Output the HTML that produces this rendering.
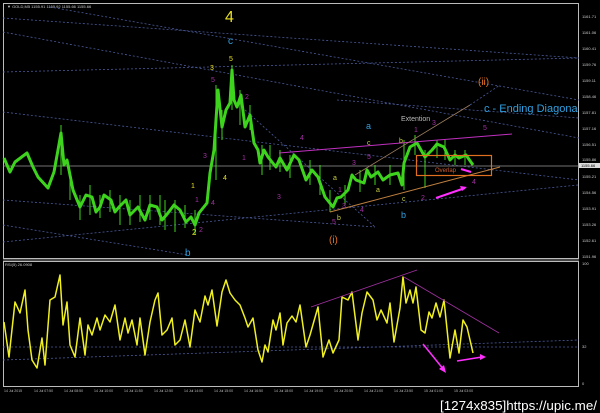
<!DOCTYPE html>
<html><head><meta charset="utf-8"><style>
html,body{margin:0;padding:0;background:#000;width:600px;height:413px;overflow:hidden}
svg{display:block}
text{font-family:"Liberation Sans",sans-serif}
</style></head><body>
<svg width="600" height="413" viewBox="0 0 600 413" xmlns="http://www.w3.org/2000/svg">
<rect width="600" height="413" fill="#000"/>
<rect x="3.5" y="3.5" width="575" height="255" fill="none" stroke="#bbb" stroke-width="1"/>
<rect x="3.5" y="261.5" width="575" height="125" fill="none" stroke="#bbb" stroke-width="1"/>
<line x1="3" y1="260" x2="579" y2="260" stroke="#888"/>
<text x="7" y="8" font-size="4" fill="#ccc">▼ GOLD,M5  1155.91 1155.92 1155.66 1155.66</text>
<text x="5" y="266" font-size="4" fill="#ccc">RSI(5) 26.0908</text>
<g font-size="4" fill="#ccc">
<text x="582" y="18">1161.71</text><text x="582" y="34">1161.06</text><text x="582" y="50">1160.41</text>
<text x="582" y="66">1159.76</text><text x="582" y="82">1159.11</text><text x="582" y="98">1158.46</text>
<text x="582" y="114">1157.81</text><text x="582" y="130">1157.16</text><text x="582" y="146">1156.51</text>
<text x="582" y="161">1155.86</text><text x="582" y="178">1155.21</text><text x="582" y="194">1154.56</text>
<text x="582" y="210">1153.91</text><text x="582" y="226">1153.26</text><text x="582" y="242">1152.61</text>
<text x="582" y="258">1151.96</text><text x="582" y="265">100</text><text x="582" y="348">32</text><text x="582" y="385">0</text>
</g>
<rect x="579" y="163" width="21" height="5" fill="#ddd"/>
<text x="581" y="167" font-size="4" fill="#000">1155.66</text>
<g font-size="3.5" fill="#bbb">
<text x="4" y="392">14 Jul 2015</text><text x="34" y="392">14 Jul 07:50</text><text x="64" y="392">14 Jul 08:50</text><text x="94" y="392">14 Jul 10:00</text><text x="124" y="392">14 Jul 11:50</text><text x="154" y="392">14 Jul 12:50</text><text x="184" y="392">14 Jul 14:00</text><text x="214" y="392">14 Jul 15:00</text><text x="244" y="392">14 Jul 16:50</text><text x="274" y="392">14 Jul 18:00</text><text x="304" y="392">14 Jul 19:00</text><text x="334" y="392">14 Jul 20:50</text><text x="364" y="392">14 Jul 21:00</text><text x="394" y="392">14 Jul 23:50</text><text x="424" y="392">15 Jul 01:00</text><text x="454" y="392">15 Jul 03:00</text>
</g>
<g stroke="#4a5a9a" stroke-width="0.8" stroke-dasharray="2,2" fill="none">
<line x1="50" y1="7" x2="579" y2="100"/>
<line x1="3" y1="18" x2="579" y2="58"/>
<line x1="3" y1="32" x2="579" y2="138"/>
<line x1="3" y1="72" x2="579" y2="58"/>
<line x1="3" y1="112" x2="579" y2="180"/>
<line x1="3" y1="200" x2="375" y2="227"/>
<line x1="3" y1="242" x2="578" y2="185"/>
<line x1="3" y1="225" x2="188" y2="255"/>
<line x1="245" y1="110" x2="375" y2="227"/>
<line x1="337" y1="100" x2="579" y2="118"/>
<line x1="3" y1="360" x2="579" y2="340"/>
<line x1="3" y1="347" x2="579" y2="347"/>
</g>
<line x1="3" y1="166" x2="579" y2="166" stroke="#999" stroke-width="0.8"/>
<polyline fill="none" stroke="#3ed41e" stroke-width="3" stroke-linejoin="round" points="4,158 10,172 15,162 27,153 33,167 38,177 48,188 54,172 58,150 61,133 64,165 67,160 73,190 80,207 86,195 92,197 96,212 100,207 104,195 111,200 115,212 119,207 126,200 130,215 138,207 145,220 150,205 157,207 162,220 168,213 174,205 180,210 186,222 191,217 195,225 199,213 207,203 210,173 214,150 216,120 218,90 222,127 226,110 230,103 232,70 234,100 237,107 241,95 245,127 250,115 254,143 258,150 260,163 264,150 268,157 276,167 280,158 287,170 294,155 299,160 306,180 312,170 318,177 325,197 333,207 337,198 341,197 348,190 352,175 356,180 364,183 367,170 371,177 378,172 383,180 390,175 398,173 402,185 404,163 410,147 417,143 421,150 425,157 432,150 437,144 444,147 450,160 455,155 459,158 466,155 473,165"/>
<g stroke="#3ed41e" stroke-width="1">
<line x1="61" y1="125" x2="61" y2="175"/><line x1="80" y1="195" x2="80" y2="220"/><line x1="120" y1="195" x2="120" y2="225"/><line x1="175" y1="200" x2="175" y2="232"/><line x1="185" y1="205" x2="185" y2="228"/><line x1="216" y1="85" x2="216" y2="180"/><line x1="232" y1="65" x2="232" y2="110"/><line x1="262" y1="145" x2="262" y2="175"/><line x1="404" y1="140" x2="404" y2="190"/><line x1="425" y1="150" x2="425" y2="188"/><line x1="437" y1="140" x2="437" y2="158"/>
<line x1="70" y1="170" x2="70" y2="200"/><line x1="90" y1="185" x2="90" y2="215"/><line x1="100" y1="195" x2="100" y2="218"/><line x1="110" y1="190" x2="110" y2="212"/><line x1="130" y1="200" x2="130" y2="225"/><line x1="140" y1="195" x2="140" y2="222"/><line x1="150" y1="195" x2="150" y2="220"/><line x1="160" y1="195" x2="160" y2="225"/><line x1="165" y1="200" x2="165" y2="230"/><line x1="195" y1="210" x2="195" y2="235"/><line x1="222" y1="110" x2="222" y2="140"/><line x1="240" y1="90" x2="240" y2="125"/><line x1="250" y1="105" x2="250" y2="130"/><line x1="270" y1="145" x2="270" y2="170"/><line x1="280" y1="150" x2="280" y2="172"/><line x1="290" y1="155" x2="290" y2="178"/><line x1="310" y1="160" x2="310" y2="185"/><line x1="320" y1="165" x2="320" y2="195"/><line x1="330" y1="190" x2="330" y2="212"/><line x1="345" y1="185" x2="345" y2="205"/><line x1="360" y1="170" x2="360" y2="192"/><line x1="375" y1="165" x2="375" y2="185"/><line x1="390" y1="165" x2="390" y2="185"/><line x1="415" y1="135" x2="415" y2="155"/><line x1="445" y1="140" x2="445" y2="160"/><line x1="455" y1="150" x2="455" y2="165"/><line x1="465" y1="150" x2="465" y2="165"/>
</g>
<line x1="279" y1="153" x2="512" y2="134" stroke="#c030c0" stroke-width="1"/>
<line x1="330" y1="212" x2="500" y2="167" stroke="#c08040" stroke-width="1"/>
<line x1="355" y1="175" x2="470" y2="105" stroke="#a08060" stroke-width="0.8"/>
<line x1="470" y1="105" x2="500" y2="85" stroke="#4a5a9a" stroke-width="0.8" stroke-dasharray="2,2"/>
<rect x="416.5" y="155.5" width="75" height="20" fill="none" stroke="#e07020" stroke-width="1.2"/>
<line x1="436" y1="198" x2="465" y2="188" stroke="#ff30ff" stroke-width="2"/>
<polygon points="467,187 460,186 462,191" fill="#ff30ff"/>
<line x1="461" y1="169" x2="471" y2="172" stroke="#ff30ff" stroke-width="2"/>
<g font-size="7">
<text x="225" y="22" font-size="16" fill="#e8e020">4</text>
<text x="228" y="44" font-size="10" fill="#30a0e0">c</text>
<text x="229" y="61" fill="#e8e020">5</text>
<text x="210" y="70" fill="#e8e020">3</text>
<text x="211" y="82" fill="#a030a0">5</text>
<text x="245" y="99" fill="#a030a0">2</text>
<text x="203" y="158" fill="#a030a0">3</text>
<text x="242" y="160" fill="#a030a0">1</text>
<text x="223" y="180" fill="#e8e020">4</text>
<text x="191" y="188" fill="#e8e020">1</text>
<text x="195" y="202" fill="#a030a0">1</text>
<text x="211" y="205" fill="#a030a0">4</text>
<text x="192" y="235" font-size="8" fill="#e8e020">2</text>
<text x="199" y="232" fill="#a030a0">2</text>
<text x="185" y="256" font-size="10" fill="#30a0e0">b</text>
<text x="300" y="140" fill="#a030a0">4</text>
<text x="277" y="199" fill="#a030a0">3</text>
<text x="366" y="129" font-size="9" fill="#30a0e0">a</text>
<text x="367" y="145" fill="#c8d040">c</text>
<text x="367" y="159" fill="#a030a0">5</text>
<text x="352" y="165" fill="#a030a0">3</text>
<text x="333" y="180" fill="#c8d040">a</text>
<text x="338" y="192" fill="#a030a0">1</text>
<text x="376" y="192" fill="#c8d040">a</text>
<text x="342" y="208" fill="#a030a0">3</text>
<text x="360" y="212" fill="#a030a0">4</text>
<text x="332" y="224" fill="#a030a0">5</text>
<text x="337" y="220" fill="#c8d040">b</text>
<text x="329" y="243" font-size="10" fill="#e07020">(i)</text>
<text x="401" y="121" font-size="7" fill="#bbb">Extention</text>
<text x="399" y="143" fill="#c8d040">b</text>
<text x="414" y="132" fill="#a030a0">1</text>
<text x="432" y="125" fill="#a030a0">3</text>
<text x="402" y="201" fill="#c8d040">c</text>
<text x="401" y="218" font-size="9" fill="#30a0e0">b</text>
<text x="421" y="200" fill="#a030a0">2</text>
<text x="472" y="184" fill="#a030a0">4</text>
<text x="483" y="130" fill="#a030a0">5</text>
<text x="478" y="85" font-size="10" fill="#e07020">(ii)</text>
<text x="484" y="112" font-size="11" fill="#30a0e0">c - Ending Diagona</text>
<text x="435" y="172" font-size="6" fill="#d06030">Overlap</text>
</g>
<polyline fill="none" stroke="#f0f020" stroke-width="1.5" stroke-linejoin="round" points="4,322 9,357 15,302 20,313 25,290 28,330 32,360 37,368 42,338 45,365 50,300 55,297 60,275 63,325 67,302 70,345 75,357 80,318 85,355 88,325 92,335 97,318 100,330 105,315 110,322 115,305 120,340 125,318 128,333 132,320 137,345 140,318 145,355 150,322 155,300 158,293 162,335 167,330 172,318 175,345 180,340 185,320 190,347 195,310 200,322 205,296 208,305 212,290 217,326 222,292 226,280 230,293 235,300 240,305 245,318 248,327 253,318 258,350 262,362 265,345 268,352 273,320 276,330 280,313 283,345 287,323 292,316 296,322 300,305 306,347 310,335 318,307 323,357 329,340 333,353 339,340 342,297 348,300 352,292 358,340 362,313 367,292 373,300 377,320 381,310 387,323 390,303 394,342 400,308 403,277 406,303 410,290 413,303 416,287 421,330 425,333 429,312 432,318 436,303 440,317 444,300 450,358 455,330 459,353 463,320 467,327 473,353"/>
<line x1="311" y1="307" x2="417" y2="270" stroke="#a030a0" stroke-width="0.8"/>
<line x1="404" y1="277" x2="499" y2="333" stroke="#a030a0" stroke-width="0.8"/>
<line x1="423" y1="344" x2="444" y2="370" stroke="#ff30ff" stroke-width="1.5"/>
<polygon points="446,373 439,369 444,365" fill="#ff30ff"/>
<line x1="457" y1="361" x2="482" y2="357" stroke="#ff30ff" stroke-width="1.5"/>
<polygon points="486,357 480,354 480,360" fill="#ff30ff"/>
<text x="440" y="410" font-size="13" fill="#fff" font-family="Liberation Sans, sans-serif" textLength="157" lengthAdjust="spacingAndGlyphs">[1274x835]https://upic.me/</text>
</svg>
</body></html>
